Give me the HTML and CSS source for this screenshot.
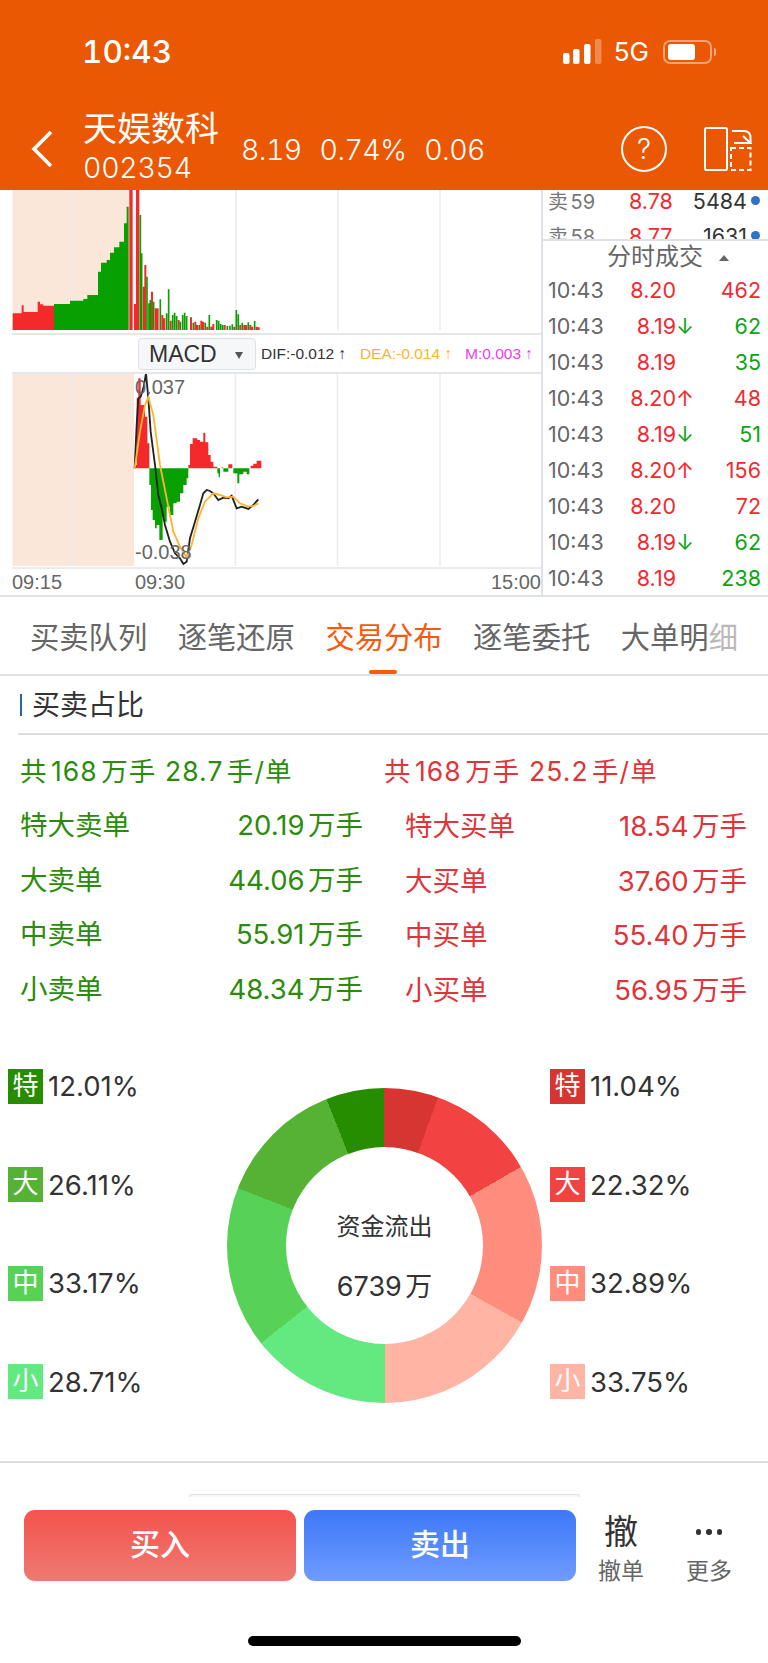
FILE: index.html
```html
<!DOCTYPE html>
<html lang="zh-CN">

<head>
    <meta charset="UTF-8">
    <meta name="viewport" content="width=device-width, initial-scale=1.0">
    <title>天娱数科</title>
    <link rel="stylesheet" href="styles.css">
</head>

<body>
    <div class="screen">
        <header class="top-bar">
            <div class="status-row">
                <span class="clock">10:43</span>
                <div class="status-icons">
                    <svg class="signal" width="39" height="25" viewBox="0 0 39 25">
                        <rect x="0" y="14" width="6.5" height="11" rx="2" fill="#fff"/>
                        <rect x="10" y="10" width="6.5" height="15" rx="2" fill="#fff"/>
                        <rect x="21" y="5" width="6.5" height="20" rx="2" fill="#fff"/>
                        <rect x="32" y="0" width="6.5" height="25" rx="2" fill="#fff" opacity=".3"/>
                    </svg>
                    <span class="net">5G</span>
                    <div class="battery"><div class="battery-fill"></div></div>
                    <div class="battery-nub"></div>
                </div>
            </div>
            <div class="title-row">
                <svg class="back" width="24" height="38" viewBox="0 0 24 38">
                    <path d="M21 2 L4 19 L21 36" fill="none" stroke="#fff" stroke-width="3.6"/>
                </svg>
                <div class="stock-name">
                    <div class="name">天娱数科</div>
                    <div class="code">002354</div>
                </div>
                <div class="quote">
                    <span>8.19</span>
                    <span>0.74%</span>
                    <span>0.06</span>
                </div>
                <div class="help">?</div>
                <svg class="flip" width="48" height="44" viewBox="0 0 48 44">
                    <rect x="1" y="1" width="22" height="42" rx="1.5" fill="none" stroke="#fff" stroke-width="2"/>
                    <rect x="27" y="21" width="19.5" height="22" fill="none" stroke="#fff" stroke-width="2" stroke-dasharray="5 3"/>
                    <path d="M28 4 H40 Q46.500 4 46.500 11 V16 M39 9 L46.500 16 H30" fill="none" stroke="#fff" stroke-width="2"/>
                </svg>
            </div>
        </header>

        <section class="market">
            <div class="charts">
                <svg class="volume-chart" width="541" height="143" viewBox="0 190 541 143">
                    <rect x="12.500" y="190" width="117" height="140" fill="#fbe6da"/>
                    <path d="M72.500 190 V330 M236 190 V330 M338 190 V330 M440 190 V330" stroke="#e9ebf0" stroke-width="1.500"/>
                    <g transform="translate(0 190) scale(.3333)">
                        <path d="M38 420 V370 H65 V346 H71 V366 H113 V335 H120 V343 H130 V347 H162 V420Z M388 0 H398 V420 H388Z M402 342 H408 V0 H418 V420 H402Z" fill="#f42a2a"/>
                        <path d="M162 420 V342 H210 V332 H250 V327 H262 V315 H294 V245 H303 V218 H320 V210 H330 V188 H342 V172 H358 V155 H372 V100 H380 V50 H386 V420Z" fill="#08a000"/>
                        <path d="M431 420 V290 M436 420 V225 M456 420 V305 M467 420 V355 M473 420 V355 M487 420 V375 M493 420 V385 M512 420 V392 M536 420 V390 M573 420 V382 M586 420 V395 M592 420 V405 M604 420 V392 M610 420 V395 M622 420 V410 M634 420 V410 M640 420 V402 M674 420 V405 M703 420 V410 M721 420 V405 M733 420 V405 M739 420 V405 M751 420 V405 M757 420 V410 M770 420 V410 M776 420 V412" stroke="#f42a2a" stroke-width="6"/>
                        <path d="M421 420 V75 M425 420 V190 M441 420 V260 M447 420 V340 M451 420 V330 M461 420 V335 M481 420 V328 M500 420 V370 M506 420 V298 M518 420 V375 M524 420 V368 M530 420 V378 M541 420 V395 M548 420 V375 M554 420 V368 M560 420 V378 M580 420 V398 M598 420 V405 M616 420 V398 M628 420 V375 M650 420 V390 M656 420 V392 M662 420 V402 M668 420 V405 M682 420 V408 M690 420 V407 M697 420 V403 M709 420 V360 M715 420 V373 M727 420 V398 M745 420 V397 M764 420 V393" stroke="#08a000" stroke-width="5"/>
                    </g>
                </svg>
                <div class="macd-row">
                    <div class="macd-select">MACD<span class="caret"></span></div>
                    <span class="val dif">DIF:-0.012 ↑</span>
                    <span class="val dea">DEA:-0.014 ↑</span>
                    <span class="val mm">M:0.003 ↑</span>
                </div>
                <svg class="macd-chart" width="541" height="193" viewBox="0 374 541 193">
                    <rect x="12.500" y="374" width="121.500" height="192" fill="#fbe6da"/>
                    <path d="M73 374 V566 M235.500 374 V566 M337.500 374 V566 M440 374 V566" stroke="#e9ebf0" stroke-width="1.500"/>
                    <g transform="translate(120 365) scale(.3333)">
                        <path d="M45 310 V300 H50 V100 H55 V40 H62 V120 H75 V155 H82 V235 H88 V310Z M205 310 V300 H210 V237 H218 V220 H232 V225 H240 V230 H250 V203 H256 V232 H265 V270 H272 V290 H280 V305 H292 V310Z M305 310 V307 H309 V310Z M325 310 V298 H337 V310Z M392 310 V302 H400 V296 H410 V287 H424 V310Z" fill="#f42a2a"/>
                        <path d="M88 310 V360 H93 V435 H98 V465 H105 V490 H110 V480 H118 V525 H128 V455 H133 V470 H140 V425 H150 V450 H160 V415 H170 V410 H180 V385 H190 V360 H200 V340 H205 V310Z M292 310 V325 H296 V337 H300 V310Z M310 310 V320 H325 V310Z M340 310 V325 H352 V355 H358 V328 H370 V320 H380 V328 H388 V310Z" fill="#08a000"/>
                        <path d="M44 310 L50 180 L55 100 L62 95 L70 70 L78 25 L85 100 L92 200 L105 300 L115 390 L125 430 L135 480 L150 530 L165 565 L180 580 L190 597 L200 590 L210 520 L225 470 L240 420 L250 385 L260 375 L270 378 L280 385 L295 405 L310 398 L325 400 L335 392 L350 430 L365 425 L385 432 L400 420 L415 403" fill="none" stroke="#222" stroke-width="5.500"/>
                        <path d="M44 310 L60 200 L75 120 L85 97 L100 150 L120 300 L140 400 L160 500 L180 545 L200 578 L215 540 L235 460 L255 410 L280 385 L300 390 L320 397 L340 395 L360 415 L385 425 L400 423 L415 415" fill="none" stroke="#fdb42f" stroke-width="5.500"/>
                    </g>
                    <text class="axis-num" x="135" y="394">0.037</text>
                    <text class="axis-num" x="135" y="559">-0.038</text>
                </svg>
                <div class="time-axis">
                    <span class="tick-first">09:15</span>
                    <span class="tick-mid">09:30</span>
                    <span>15:00</span>
                </div>
            </div>

            <div class="side">
                <div class="ask-list">
                    <div class="ask-row"><span class="ask-label">卖59</span><span class="ask-price">8.78</span><span class="ask-vol">5484</span><i class="dot"></i></div>
                    <div class="ask-row"><span class="ask-label">卖58</span><span class="ask-price">8.77</span><span class="ask-vol">1631</span><i class="dot"></i></div>
                </div>
                <div class="trade-head">分时成交<span class="trade-caret"></span></div>
                <div class="trade-row"><span class="t-time">10:43</span><span class="t-price">8.20</span><span class="t-arrow"></span><span class="t-vol up">462</span></div>
                <div class="trade-row"><span class="t-time">10:43</span><span class="t-price">8.19</span><span class="t-arrow down">↓</span><span class="t-vol down">62</span></div>
                <div class="trade-row"><span class="t-time">10:43</span><span class="t-price">8.19</span><span class="t-arrow"></span><span class="t-vol down">35</span></div>
                <div class="trade-row"><span class="t-time">10:43</span><span class="t-price">8.20</span><span class="t-arrow up">↑</span><span class="t-vol up">48</span></div>
                <div class="trade-row"><span class="t-time">10:43</span><span class="t-price">8.19</span><span class="t-arrow down">↓</span><span class="t-vol down">51</span></div>
                <div class="trade-row"><span class="t-time">10:43</span><span class="t-price">8.20</span><span class="t-arrow up">↑</span><span class="t-vol up">156</span></div>
                <div class="trade-row"><span class="t-time">10:43</span><span class="t-price">8.20</span><span class="t-arrow"></span><span class="t-vol up">72</span></div>
                <div class="trade-row"><span class="t-time">10:43</span><span class="t-price">8.19</span><span class="t-arrow down">↓</span><span class="t-vol down">62</span></div>
                <div class="trade-row"><span class="t-time">10:43</span><span class="t-price">8.19</span><span class="t-arrow"></span><span class="t-vol down">238</span></div>
            </div>
        </section>

        <nav class="tabs">
            <span class="tab">买卖队列</span>
            <span class="tab">逐笔还原</span>
            <span class="tab active">交易分布</span>
            <span class="tab">逐笔委托</span>
            <span class="tab fade">大单明<em>细</em></span>
        </nav>

        <div class="section-title"><span>买卖占比</span></div>

        <div class="summary">
            <div class="sell">共168万手 28.7手/单</div>
            <div class="buy">共168万手 25.2手/单</div>
        </div>

        <div class="orders">
            <div class="order sell"><span>特大卖单</span><span>20.19万手</span></div>
            <div class="order buy"><span>特大买单</span><span>18.54万手</span></div>
            <div class="order sell"><span>大卖单</span><span>44.06万手</span></div>
            <div class="order buy"><span>大买单</span><span>37.60万手</span></div>
            <div class="order sell"><span>中卖单</span><span>55.91万手</span></div>
            <div class="order buy"><span>中买单</span><span>55.40万手</span></div>
            <div class="order sell"><span>小卖单</span><span>48.34万手</span></div>
            <div class="order buy"><span>小买单</span><span>56.95万手</span></div>
        </div>

        <div class="flow">
            <div class="legend">
                <div class="legend-item"><b class="c-g1">特</b>12.01%</div>
                <div class="legend-item"><b class="c-g2">大</b>26.11%</div>
                <div class="legend-item"><b class="c-g3">中</b>33.17%</div>
                <div class="legend-item"><b class="c-g4">小</b>28.71%</div>
            </div>
            <div class="donut">
                <div class="donut-hole">
                    <div>资金流出</div>
                    <div class="donut-num">6739万</div>
                </div>
            </div>
            <div class="legend">
                <div class="legend-item"><b class="c-r1">特</b>11.04%</div>
                <div class="legend-item"><b class="c-r2">大</b>22.32%</div>
                <div class="legend-item"><b class="c-r3">中</b>32.89%</div>
                <div class="legend-item"><b class="c-r4">小</b>33.75%</div>
            </div>
        </div>

        <div class="peek"></div>

        <div class="action-bar">
            <button class="btn btn-buy">买入</button>
            <button class="btn btn-sell">卖出</button>
            <div class="action">
                <div class="action-icon">撤</div>
                <div class="action-label">撤单</div>
            </div>
            <div class="action">
                <div class="action-dots"><i></i><i></i><i></i></div>
                <div class="action-label">更多</div>
            </div>
        </div>

        <div class="home-bar"></div>
    </div>
</body>

</html>
```
FILE: styles.css
```css
body {
    font-family: Inter, 'Noto Sans CJK SC', sans-serif;
    margin: 0;
    padding: 0;
    background-color: #fff;
    text-autospace: normal;
}

.screen {
    width: 768px;
    height: 1663px;
    overflow: hidden;
    display: flex;
    flex-direction: column;
    background-color: #fff;
}

/* orange header */
.top-bar {
    height: 190px;
    flex: none;
    background-color: #eb5804;
    color: #fff;
}

.status-row {
    height: 103px;
    display: flex;
    align-items: center;
    justify-content: space-between;
    padding: 0 52px 0 82px;
    box-sizing: border-box;
}

.clock {
    font-size: 31.500px;
    font-weight: 500;
    font-variant-numeric: tabular-nums;
}

.status-icons {
    display: flex;
    align-items: center;
}

.net {
    font-size: 26px;
    margin-left: 12px;
    margin-right: 14px;
}

.battery {
    width: 49px;
    height: 24px;
    box-sizing: border-box;
    border: 2px solid rgba(255, 255, 255, 0.45);
    border-radius: 7px;
    padding: 2px 3px;
}

.battery-fill {
    width: 27px;
    height: 16px;
    background-color: #fff;
    border-radius: 3px;
}

.battery-nub {
    width: 2px;
    height: 8px;
    margin-left: 2px;
    background-color: rgba(255, 255, 255, 0.5);
    border-radius: 0 2px 2px 0;
}

.title-row {
    height: 87px;
    display: flex;
    align-items: center;
    padding-left: 30px;
}

.back {
    flex: none;
    margin-top: 5px;
}

.stock-name {
    margin-left: 29px;
    width: 158px;
    flex: none;
}

.name {
    font-size: 34px;
    line-height: 40px;
}

.code {
    font-size: 28.500px;
    line-height: 32px;
    font-weight: 300;
    font-variant-numeric: tabular-nums;
    letter-spacing: -0.3px;
    margin-top: 3px;
}

.quote {
    display: flex;
    gap: 18px;
    font-size: 28.500px;
    font-weight: 300;
    font-variant-numeric: tabular-nums;
    letter-spacing: -0.6px;
    width: 380px;
    flex: none;
    margin-top: 5px;
}

.help {
    width: 42px;
    height: 42px;
    flex: none;
    border: 2px solid #fff;
    border-radius: 50%;
    text-align: center;
    font-size: 28px;
    font-weight: 300;
    line-height: 42px;
    margin-top: 5px;
}

.flip {
    flex: none;
    margin-left: 37px;
    margin-top: 5px;
}

/* chart + trade list */
.market {
    height: 407px;
    flex: none;
    display: flex;
    box-sizing: border-box;
    border-bottom: 2px solid #dfe1e8;
}

.charts {
    width: 543px;
    flex: none;
    border-right: 2px solid #dfe1e8;
    box-sizing: border-box;
}

.charts svg {
    display: block;
}

.macd-row {
    height: 41px;
    margin-left: 12px;
    box-sizing: border-box;
    border-top: 2px solid #e4e6ec;
    border-bottom: 2px solid #e4e6ec;
    display: flex;
    align-items: center;
    white-space: nowrap;
}

.macd-select {
    width: 118px;
    height: 32px;
    box-sizing: border-box;
    margin-left: 126px;
    padding-left: 10px;
    border: 1px solid #dde0e6;
    border-radius: 4px;
    background-color: #f6f7f9;
    color: #333;
    font-family: 'Liberation Sans', sans-serif;
    font-size: 23px;
    line-height: 30px;
    flex: none;
}

.caret {
    display: inline-block;
    margin-left: 18px;
    vertical-align: 3px;
    border-left: 4px solid transparent;
    border-right: 4px solid transparent;
    border-top: 7px solid #555;
}

.val {
    font-family: 'Liberation Sans', sans-serif;
    font-size: 15.500px;
    margin-left: 5px;
    flex: none;
}

.dif {
    color: #333;
    width: 94px;
}

.dea {
    color: #fdb42f;
    width: 100px;
}

.mm {
    color: #ee3cee;
}

.axis-num {
    font-family: 'Liberation Sans', sans-serif;
    font-size: 20px;
    fill: #666;
}

.time-axis {
    height: 27px;
    margin-left: 12px;
    border-top: 2px solid #e9ebf0;
    display: flex;
    align-items: center;
    justify-content: space-between;
    font-family: 'Liberation Sans', sans-serif;
    font-size: 20px;
    color: #666;
}

.tick-first {
    width: 123px;
}

.tick-mid {
    margin-right: auto;
}

.side {
    flex: 1;
    min-width: 0;
}

.ask-list {
    height: 51px;
    overflow: hidden;
    box-sizing: border-box;
    border-bottom: 2px solid #dfe1e8;
}

.ask-row {
    height: 35px;
    display: flex;
    align-items: center;
    font-size: 21.500px;
    padding-left: 5px;
}

.ask-row:first-child {
    margin-top: -7px;
}

.ask-label {
    width: 81px;
    color: #777;
    font-size: 20px;
}

.ask-price {
    width: 44px;
    color: #f4282f;
}

.ask-vol {
    width: 74px;
    text-align: right;
    color: #333;
}

.dot {
    width: 9px;
    height: 9px;
    margin-left: 4px;
    border-radius: 50%;
    background-color: #2f72c8;
}

.trade-head {
    height: 31px;
    line-height: 31px;
    font-size: 24px;
    color: #666;
    padding-left: 64px;
}

.trade-caret {
    display: inline-block;
    margin-left: 16px;
    vertical-align: 4px;
    border-left: 5px solid transparent;
    border-right: 5px solid transparent;
    border-bottom: 6px solid #666;
}

.trade-row {
    height: 36px;
    display: grid;
    grid-template-columns: 78px 50px 16px 1fr;
    align-items: center;
    padding: 0 7px 0 5px;
    font-size: 21.500px;
}

.t-time {
    color: #666;
}

.t-price {
    color: #f4282f;
    text-align: right;
    white-space: nowrap;
}

.t-vol {
    text-align: right;
}

.up {
    color: #f4282f;
}

.down {
    color: #0ca511;
}

/* tabs */
.tabs {
    height: 79px;
    flex: none;
    box-sizing: border-box;
    padding-left: 30px;
    border-bottom: 2px solid #dfe1e8;
    display: flex;
    gap: 30px;
    font-size: 29.300px;
    line-height: 82px;
    color: #666;
    white-space: nowrap;
}

.tab {
    width: 117.700px;
    flex: none;
    position: relative;
}

.tab em {
    font-style: normal;
    opacity: 0.45;
}

.tab.active {
    color: #f9590a;
}

.tab.active::after {
    content: '';
    position: absolute;
    left: 44px;
    bottom: 0;
    width: 28px;
    height: 4px;
    border-radius: 2px;
    background-color: #f9590a;
}

.section-title {
    height: 59px;
    flex: none;
    margin-left: 18px;
    box-sizing: border-box;
    border-bottom: 2px solid #dcdde3;
    display: flex;
    align-items: center;
    font-size: 28px;
    color: #333;
}

.section-title span {
    margin-left: 2px;
    padding-left: 10px;
    line-height: 22px;
    border-left: 2px solid #2f5fa8;
}

.summary {
    flex: none;
    height: 64px;
    padding: 4px 0 0 20px;
    box-sizing: border-box;
    display: flex;
    align-items: center;
    font-size: 26.500px;
    letter-spacing: 1.1px;
}

.summary div {
    width: 364px;
    flex: none;
    white-space: nowrap;
}

.sell {
    color: #2a8c0a;
}

.buy {
    color: #e0343a;
}

.orders {
    flex: none;
    display: grid;
    grid-template-columns: 343px 342px;
    column-gap: 42px;
    grid-auto-rows: 54.500px;
    padding-left: 20px;
    font-size: 27.500px;
    margin-top: -3px;
}

.order {
    display: flex;
    align-items: center;
    justify-content: space-between;
}

.order.buy {
    position: relative;
    top: 1px;
}

/* donut with the two legends */
.flow {
    flex: none;
    height: 425px;
    margin-top: 24px;
    display: grid;
    grid-template-columns: 219px 315px 1fr;
    align-items: center;
    box-sizing: border-box;
    padding: 2px 0 33px 8px;
    border-bottom: 2px solid #dcdde3;
}

.legend {
    display: flex;
    flex-direction: column;
    gap: 63.500px;
    font-size: 27.500px;
    color: #333;
}

.flow .legend:last-child {
    margin-left: 8px;
}

.legend-item {
    display: flex;
    align-items: center;
    gap: 5px;
}

.legend-item b {
    width: 35px;
    height: 35px;
    font-size: 26px;
    font-weight: 400;
    text-align: center;
    line-height: 34px;
    color: #fff;
}

.c-g1 { background-color: #268c00; }
.c-g2 { background-color: #55b234; }
.c-g3 { background-color: #57d257; }
.c-g4 { background-color: #62e97f; }
.c-r1 { background-color: #d63532; }
.c-r2 { background-color: #f24241; }
.c-r3 { background-color: #ff8d7d; }
.c-r4 { background-color: #ffb4a4; }

.donut {
    width: 315px;
    height: 315px;
    margin-top: 22px;
    border-radius: 50%;
    display: flex;
    align-items: center;
    justify-content: center;
    background: conic-gradient(
        #d63532 0deg 19.870deg,
        #f24241 19.870deg 60.050deg,
        #ff8d7d 60.050deg 119.250deg,
        #ffb4a4 119.250deg 180deg,
        #62e97f 180deg 231.680deg,
        #57d257 231.680deg 291.390deg,
        #55b234 291.390deg 338.390deg,
        #268c00 338.390deg 360deg
    );
}

.donut-hole {
    width: 197px;
    height: 197px;
    box-sizing: border-box;
    padding-top: 20px;
    border-radius: 50%;
    background-color: #fff;
    display: flex;
    flex-direction: column;
    align-items: center;
    justify-content: center;
    gap: 23px;
    font-size: 24px;
    color: #333;
}

.donut-num {
    font-size: 27px;
}

.peek {
    flex: none;
    width: 391px;
    height: 3px;
    margin: 31px 0 0 189px;
    box-sizing: border-box;
    border: 1px solid #dfe1e8;
    border-bottom: none;
    border-radius: 4px 4px 0 0;
    background-color: #f8f8fa;
}

.action-bar {
    flex: none;
    height: 71px;
    margin-top: 13px;
    display: flex;
    padding-left: 24px;
}

.btn {
    width: 272px;
    height: 71px;
    flex: none;
    margin-right: 8px;
    padding: 0 0 7px;
    border: none;
    border-radius: 11px;
    color: #fff;
    font-family: 'Noto Sans CJK SC', sans-serif;
    font-size: 30px;
    font-weight: 500;
}

.btn-buy {
    background: linear-gradient(#f4534c, #ee7a73);
}

.btn-sell {
    margin-right: 1px;
    background: linear-gradient(#3d78f8, #6f9cff);
}

.action {
    width: 88px;
    flex: none;
    text-align: center;
}

.action-icon {
    font-size: 34px;
    line-height: 44px;
    margin-bottom: 2px;
    color: #333;
}

.action-dots {
    height: 46px;
    display: flex;
    gap: 5px;
    justify-content: center;
    padding-top: 19px;
    box-sizing: border-box;
}

.action-dots i {
    width: 5.500px;
    height: 5.500px;
    border-radius: 50%;
    background-color: #333;
}

.action-label {
    font-size: 23px;
    line-height: 30px;
    color: #666;
}

.home-bar {
    flex: none;
    width: 273px;
    height: 10px;
    margin: 55px 0 0 248px;
    border-radius: 5px;
    background-color: #000;
}
```
